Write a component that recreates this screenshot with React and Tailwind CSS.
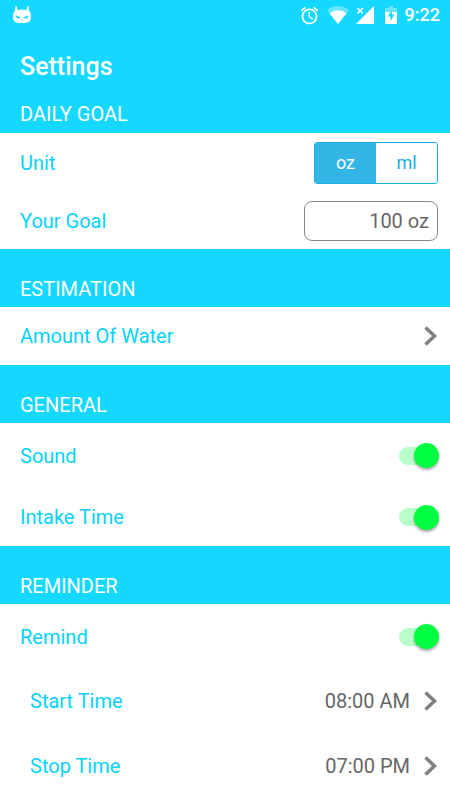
import { useState } from "react";
import { MdAlarm } from "react-icons/md";

function CatIcon() {
  return (
    <svg width="20" height="20" viewBox="0 0 20 20" aria-hidden="true">
      <path
        fill="#fff"
        fillRule="evenodd"
        d="M3.500 1h1l1 4Q10 4.200 14.500 5l1-4h1l.5 5Q19 7 19 11.500C19 16.500 17 18 10 18S1 16.500 1 11.500Q1 7 3 6ZM4 10.500C4 13 5 13.500 6.500 13.500S8.500 13 8.500 12.300ZM16 10.500L11.500 12.300C11.500 13 12 13.500 13.500 13.500S16 13 16 10.500ZM9 14.500l1 1 1-1Z"
      />
    </svg>
  );
}

function StatusIcons() {
  return (
    <>
      <MdAlarm size={21} aria-hidden="true" />
      <svg width="22" height="18" viewBox="0 0 22 18" fill="#fff" aria-hidden="true">
        <path opacity=".35" d="M0 4Q11-4 22 4L11 18Z" />
        <path d="M2.500 7.200Q11 1.500 19.500 7.200L11 18Z" />
      </svg>
      <svg width="18" height="18" viewBox="0 0 18 18" aria-hidden="true">
        <path d="M18 0v18H0Z" fill="#fff" />
        <path d="M0 0h8.500v8.500H0Z" fill="#14d8ff" />
        <path d="M1.500 2l5.500 5.500M7 2L1.500 7.500" stroke="#fff" strokeWidth="1.500" />
      </svg>
      <svg width="12" height="18" viewBox="0 0 12 18" fill="#fff" className="ml-1" aria-hidden="true">
        <path opacity=".35" d="M4 0h4v2h4v4H0V2h4Z" />
        <path d="M0 6h12v12H0Z" />
        <path fill="#14d8ff" d="M7 4.500L2.500 10.500H5.500V15L9.500 8.500H7Z" />
      </svg>
    </>
  );
}

function Chevron() {
  return (
    <svg width="14" height="20" viewBox="0 0 14 20" fill="none" stroke="#808080" strokeWidth="3.500" aria-hidden="true">
      <path d="M1.500 1.500L10.500 10L1.500 18.500" />
    </svg>
  );
}

function SectionLabel({ children }) {
  return <h2 className="flex h-[58px] items-center bg-[#14d8ff] px-5 pt-[21px] text-xl text-white">{children}</h2>;
}

function SwitchRow({ label, id, height }) {
  const [on, setOn] = useState(true);
  return (
    <div className={`flex items-center justify-between pr-[11px] pl-5 ${height}`}>
      <label htmlFor={id}>{label}</label>
      <input
        id={id}
        type="checkbox"
        role="switch"
        checked={on}
        onChange={() => setOn(!on)}
        className="flex h-[18px] w-10 appearance-none items-center rounded-full bg-gray-300 before:size-[25px] before:shrink-0 before:rounded-full before:bg-gray-50 before:shadow-[0_2px_3px_rgba(0,0,0,0.35)] checked:justify-end checked:bg-[#b8ffcb] checked:before:bg-[#00ff40]"
      />
    </div>
  );
}

function LinkRow({ label, value, className }) {
  return (
    <button type="button" className={`flex w-full items-center pr-3 text-left ${className}`}>
      <span className="flex-1">{label}</span>
      <span className="text-[#666]">{value}</span>
      <span className="ml-[14px]">
        <Chevron />
      </span>
    </button>
  );
}

export default function App() {
  const [unit, setUnit] = useState("oz");
  return (
    <main className="min-h-screen bg-white font-[Roboto,sans-serif] text-xl text-[#06d3fc]">
      <header className="bg-[#14d8ff] text-white">
        <div className="flex h-8 items-center justify-between pr-[10px] pb-0.5 pl-3">
          <CatIcon />
          <div className="flex items-center gap-[7px]">
            <StatusIcons />
            <span className="ml-px text-lg font-medium">9:22</span>
          </div>
        </div>
        <h1 className="flex h-[68px] items-center px-5 text-[25px] font-medium">Settings</h1>
        <h2 className="-mt-[5px] flex h-[38px] items-center px-5">DAILY GOAL</h2>
      </header>

      <section>
        <div className="flex h-[58px] items-center justify-between pt-0.5 pr-3 pl-5">
          <span id="unit-label">Unit</span>
          <div role="group" aria-labelledby="unit-label" className="flex h-[42px] w-[124px] overflow-hidden rounded-[3px] border border-[#18afe3] text-lg">
            {["oz", "ml"].map((name) => (
              <button
                key={name}
                type="button"
                aria-pressed={unit === name}
                onClick={() => setUnit(name)}
                className={`flex-1 ${unit === name ? "bg-[#33b5e5] text-white" : "bg-white text-[#18afe3]"}`}
              >
                {name}
              </button>
            ))}
          </div>
        </div>
        <div className="flex h-[58px] items-center justify-between pt-0.5 pr-3 pl-5">
          <label htmlFor="goal">Your Goal</label>
          <input
            id="goal"
            defaultValue="100 oz"
            className="h-10 w-[134px] rounded-lg border border-[#888] bg-white px-2 text-right text-[#666]"
          />
        </div>
      </section>

      <SectionLabel>ESTIMATION</SectionLabel>
      <LinkRow label="Amount Of Water" className="h-[58px] pl-5" />

      <SectionLabel>GENERAL</SectionLabel>
      <SwitchRow id="sound" label="Sound" height="h-[65px]" />
      <SwitchRow id="intake" label="Intake Time" height="h-[58px]" />

      <SectionLabel>REMINDER</SectionLabel>
      <SwitchRow id="remind" label="Remind" height="h-[65px]" />
      <LinkRow label="Start Time" value="08:00 AM" className="h-16 pl-[30px]" />
      <LinkRow label="Stop Time" value="07:00 PM" className="h-[65px] pl-[30px]" />
    </main>
  );
}
